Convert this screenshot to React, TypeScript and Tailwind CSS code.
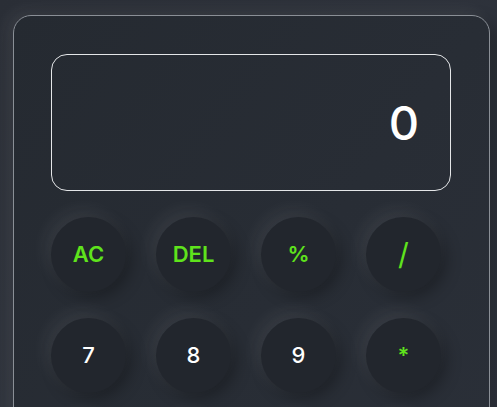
import { useState } from "react";

type Key = { label: string; accent?: boolean; big?: boolean };

const KEYS: Key[] = [
  { label: "AC", accent: true },
  { label: "DEL", accent: true },
  { label: "%", accent: true },
  { label: "/", accent: true, big: true },
  { label: "7" },
  { label: "8" },
  { label: "9" },
  { label: "*", accent: true },
  { label: "4" },
  { label: "5" },
  { label: "6" },
  { label: "-", accent: true },
  { label: "1" },
  { label: "2" },
  { label: "3" },
  { label: "+", accent: true },
];

function keyClass(k: Key) {
  if (k.big) return "text-[30px] font-normal text-[#5fe31c]";
  if (k.accent) return "text-[22px] font-semibold text-[#5fe31c]";
  return "text-[22px] font-medium text-white";
}

export default function App() {
  const [value, setValue] = useState("0");

  const press = (label: string) => {
    if (label === "AC") return setValue("0");
    if (label === "DEL") return setValue((v) => (v.length > 1 ? v.slice(0, -1) : "0"));
    setValue((v) => (v === "0" ? label : v + label));
  };

  return (
    <div
      className="h-screen overflow-hidden bg-gradient-to-br from-[#2a2e36] to-[#313640] pt-[15px] pl-[13px]"
      style={{ fontFamily: "Inter, 'Noto Sans', sans-serif" }}
    >
      <div className="w-[477px] rounded-[18px] border border-[#8a8f96] bg-gradient-to-br from-[#252a31] to-[#2b3039] px-[37px] pt-[38px] pb-10 shadow-[-6px_-4px_16px_rgba(255,255,255,0.07),6px_6px_16px_rgba(0,0,0,0.3)]">
        <div className="flex h-[137px] w-[400px] items-center justify-end rounded-2xl border border-[#e4e6e8] pr-[31px]">
          <span className="text-[47px] font-medium leading-none text-white">{value}</span>
        </div>

        <div className="mt-[26px] grid grid-cols-[repeat(4,75px)] gap-x-[30px] gap-y-[26px]">
          {KEYS.map((k) => (
            <button
              key={k.label}
              onClick={() => press(k.label)}
              className={`flex h-[75px] w-[75px] items-center justify-center rounded-full bg-[#22262d] shadow-[-5px_-6px_18px_rgba(255,255,255,0.08),5px_5px_16px_rgba(0,0,0,0.3)] ${keyClass(k)}`}
            >
              {k.label}
            </button>
          ))}
        </div>
      </div>
    </div>
  );
}
